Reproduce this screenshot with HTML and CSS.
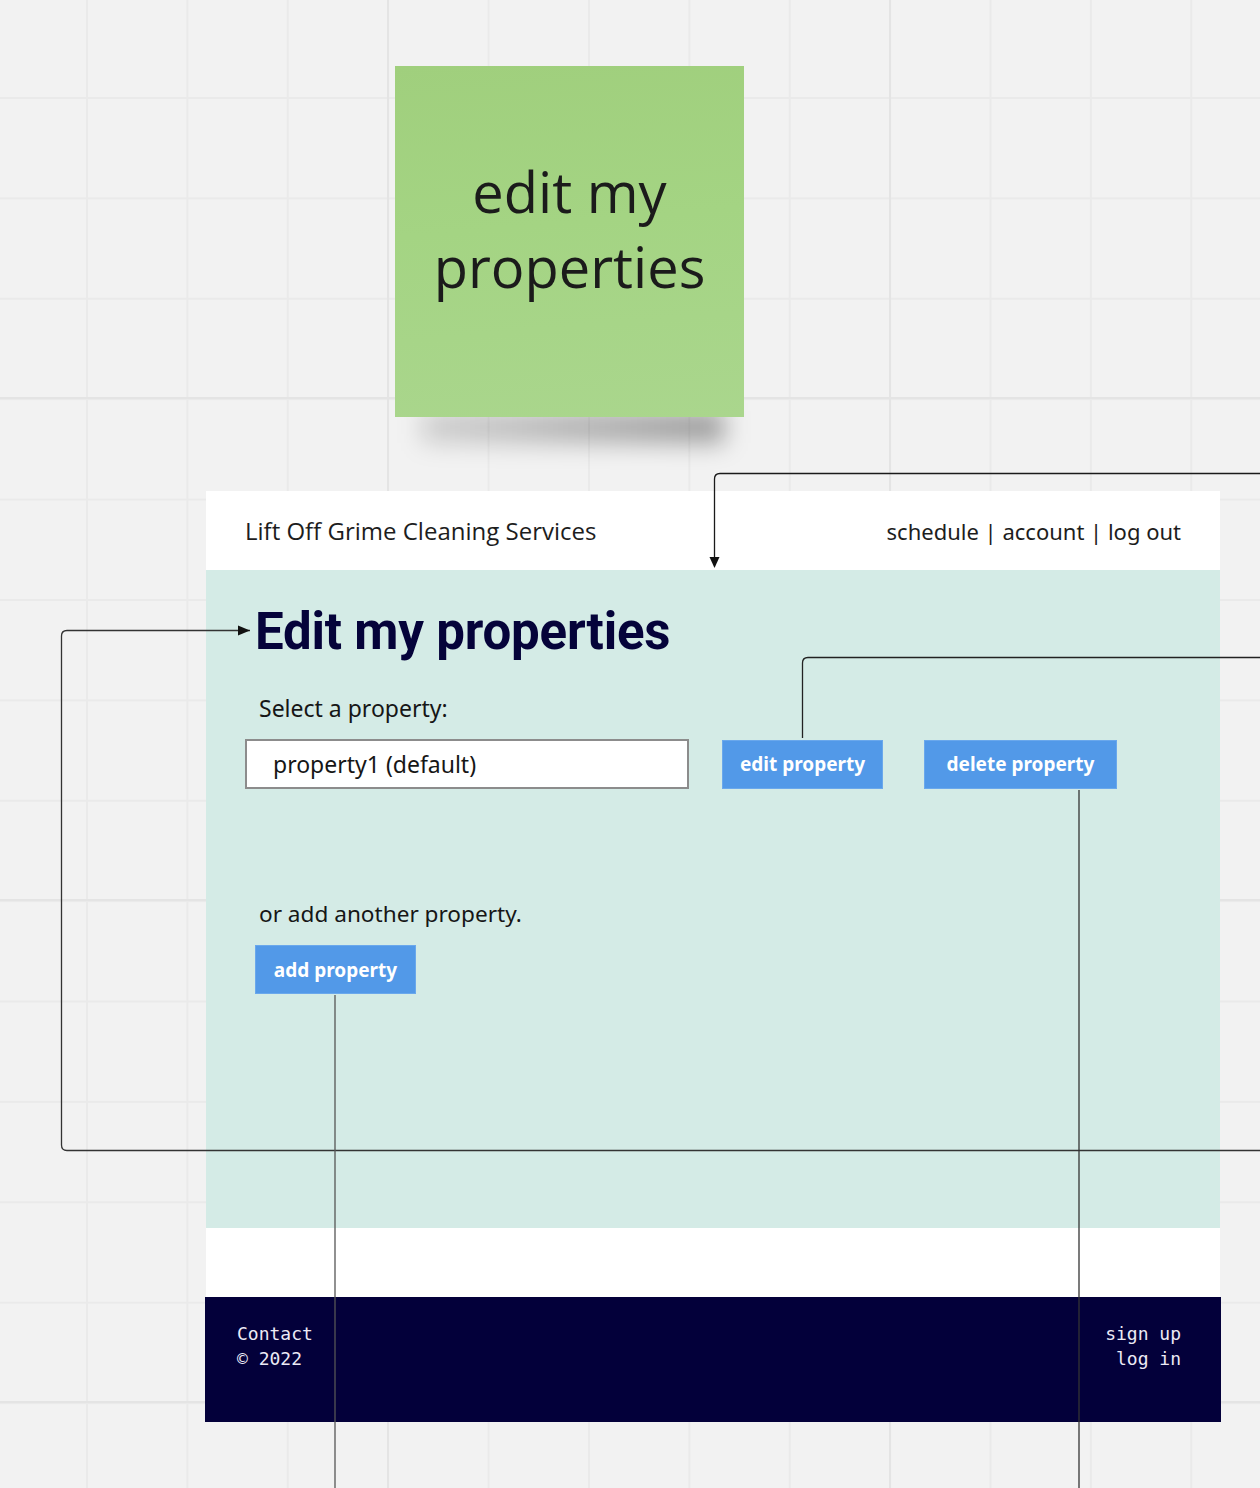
FILE: index.html
```html
<!DOCTYPE html>
<html lang="en">
<head>
<meta charset="utf-8">
<title>edit my properties</title>
<link rel="stylesheet" href="styles.css">
</head>
<body>
<div class="board">
  <div class="sticky">
    <p class="sticky-text">edit my<br>properties</p>
  </div>

  <div class="frame">
    <header class="site-header">
      <span class="brand">Lift Off Grime Cleaning Services</span>
      <nav class="nav">schedule | account | log out</nav>
    </header>
    <main class="main">
      <h1 class="title">Edit my properties</h1>
      <p class="label">Select a property:</p>
      <div class="select-row">
        <div class="select">property1 (default)</div>
        <span class="btn btn-edit">edit property</span>
        <span class="btn btn-delete">delete property</span>
      </div>
      <p class="label label-add">or add another property.</p>
      <span class="btn btn-add">add property</span>
    </main>
    <div class="spacer"></div>
    <footer class="site-footer">
      <div class="foot-left">Contact<br>© 2022</div>
      <div class="foot-right">sign up<br>log in</div>
    </footer>
  </div>

  <svg class="connectors" width="1260" height="1488" viewBox="0 0 1260 1488">
    <g fill="none" stroke-width="1.3">
      <path d="M1260 473.5 H720 Q714.5 473.5 714.5 479 V560" stroke="#1a1a1a"/>
      <path d="M250 630.5 H67 Q61.5 630.5 61.5 636 V1145 Q61.5 1150.5 67 1150.5 H1260" stroke="#333"/>
      <path d="M1260 657.5 H808 Q802.5 657.5 802.5 663 V738" stroke="#222"/>
      <path d="M1079 790 V1488" stroke="#333"/>
      <path d="M335 995 V1488" stroke="#555"/>
    </g>
    <polygon points="709.5,557 719.5,557 714.5,568" fill="#111"/>
    <polygon points="238,625.5 238,635.5 250,630.5" fill="#111"/>
  </svg>
</div>
</body>
</html>
```

FILE: styles.css
```css
* { box-sizing: border-box; }
html, body { margin: 0; padding: 0; }
body {
  width: 1260px;
  height: 1488px;
  overflow: hidden;
  background-color: #f2f2f2;
}
.board {
  position: relative;
  z-index: 0;
  width: 1260px;
  height: 1488px;
  background-color: #f2f2f2;
  background-image:
    linear-gradient(to right, #e4e4e4 0, #e4e4e4 2px, transparent 2px),
    linear-gradient(to bottom, #e4e4e4 0, #e4e4e4 2px, transparent 2px),
    linear-gradient(to right, #eaeaea 0, #eaeaea 1.5px, transparent 1.5px),
    linear-gradient(to bottom, #eaeaea 0, #eaeaea 1.5px, transparent 1.5px);
  background-size: 502px 502px, 502px 502px, 100.4px 100.4px, 100.4px 100.4px;
  background-position: 387px 0, 0 397px, 86px 0, 0 97px;
}

/* sticky note */
.sticky {
  position: absolute;
  left: 395px;
  top: 66px;
  width: 349px;
  height: 351px;
  background: linear-gradient(175deg, #a0cf7d 0%, #a4d483 45%, #aad68d 100%);
  display: flex;
  align-items: center;
  justify-content: center;
  padding-bottom: 26px;
}
.sticky::after {
  content: "";
  position: absolute;
  left: 26px;
  right: 20px;
  bottom: -26px;
  height: 32px;
  background: linear-gradient(to right, rgba(0, 0, 0, 0.14), rgba(0, 0, 0, 0.3) 70%, rgba(0, 0, 0, 0.36));
  filter: blur(12px);
  z-index: -1;
}
.sticky-text {
  margin: 0;
  font-family: "Open Sans", sans-serif;
  font-size: 56px;
  line-height: 75px;
  color: #1b1b1b;
  text-align: center;
}

/* wireframe */
.frame {
  position: absolute;
  left: 206px;
  top: 491px;
  width: 1014px;
  display: flex;
  flex-direction: column;
}
.site-header {
  height: 79px;
  background: #ffffff;
  display: flex;
  align-items: center;
  justify-content: space-between;
  padding: 0 39px 0 39px;
  font-family: "Open Sans", sans-serif;
  font-size: 24px;
  color: #1d1d1d;
}
.nav {
  font-family: "Noto Sans", sans-serif;
  font-size: 22px;
}
.main {
  height: 658px;
  background: #d4ebe6;
  padding: 30px 0 0 49px;
  display: flex;
  flex-direction: column;
  align-items: flex-start;
  font-family: "Noto Sans", sans-serif;
  color: #161616;
}
.title {
  margin: 0;
  font-family: "Roboto", sans-serif;
  font-weight: 700;
  font-size: 51px;
  line-height: 64px;
  color: #05033a;
  letter-spacing: -0.2px;
}
.label {
  margin: 29px 0 0 4px;
  font-size: 23px;
  line-height: 30px;
}
.select-row {
  display: flex;
  align-items: center;
  margin: 16px 0 0 -10px;
}
.select {
  width: 444px;
  height: 50px;
  background: #ffffff;
  border: 2px solid #8c8c8c;
  display: flex;
  align-items: center;
  padding-left: 26px;
  font-size: 23px;
  color: #161616;
}
.btn {
  display: flex;
  align-items: center;
  justify-content: center;
  height: 49px;
  background: #5299e8;
  color: #ffffff;
  font-family: "Noto Sans", sans-serif;
  font-weight: 700;
  font-size: 19px;
  border: 1px solid #6aa8ec;
}
.btn-edit { width: 161px; margin-left: 33px; }
.btn-delete { width: 193px; margin-left: 41px; }
.label-add { margin-top: 110px; font-size: 22.6px; }
.btn-add { width: 161px; margin-top: 16px; }

.spacer {
  height: 69px;
  background: #ffffff;
}
.site-footer {
  height: 125px;
  margin: 0 -1px;
  background: #03003a;
  display: flex;
  justify-content: space-between;
  padding: 24px 40px 0 32px;
  font-family: "DejaVu Sans Mono", monospace;
  font-size: 18px;
  line-height: 25px;
  color: #eceaf5;
}
.foot-right { text-align: right; }

.connectors {
  position: absolute;
  left: 0;
  top: 0;
  pointer-events: none;
  z-index: 5;
}
```
